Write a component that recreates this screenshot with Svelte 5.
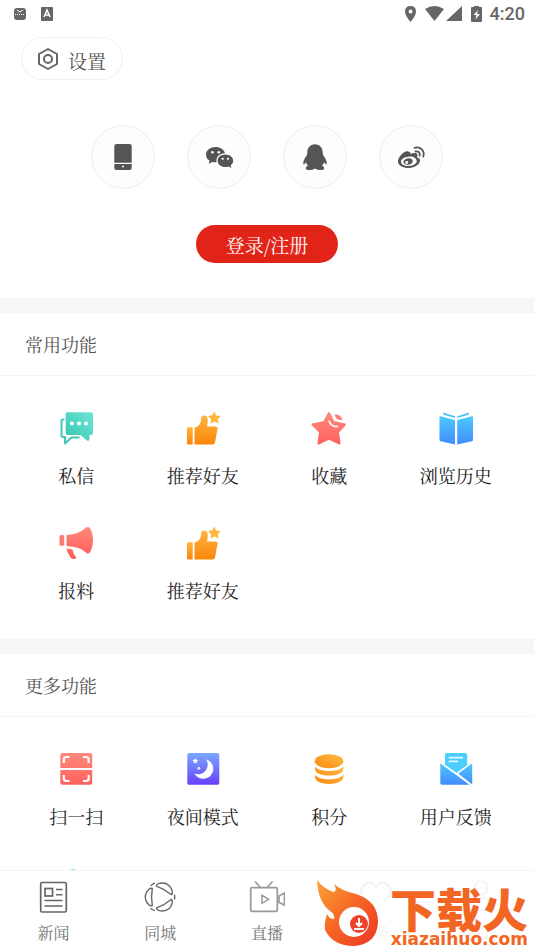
<script>
  const socials = [
    { id: "phone", label: "手机登录" },
    { id: "wechat", label: "微信登录" },
    { id: "qq", label: "QQ登录" },
    { id: "weibo", label: "微博登录" },
  ];

  const sections = [
    {
      title: "常用功能",
      items: [
        { icon: "message", label: "私信" },
        { icon: "thumb", label: "推荐好友" },
        { icon: "star", label: "收藏" },
        { icon: "book", label: "浏览历史" },
        { icon: "horn", label: "报料" },
        { icon: "thumb", label: "推荐好友" },
      ],
    },
    {
      title: "更多功能",
      items: [
        { icon: "scan", label: "扫一扫" },
        { icon: "night", label: "夜间模式" },
        { icon: "coins", label: "积分" },
        { icon: "mail", label: "用户反馈" },
        { icon: "drop", label: "" },
      ],
    },
  ];

  const tabs = [
    { icon: "news", label: "新闻" },
    { icon: "city", label: "同城" },
    { icon: "live", label: "直播" },
    { icon: "heart", label: "服务", faint: true },
    { icon: "me", label: "我的", faint: true },
  ];

  let current = $state("我的");
</script>

{#snippet tileIcon(name)}
  <svg class="tile-icon" viewBox="0 0 36 36" aria-hidden="true">
    {#if name === "message"}
      <path d="M6.5 9.5H5Q3.500 9.500 3.500 11V25.500Q3.500 27 5 27H7V33.500L13.500 27.500H21.500" fill="none" stroke="#3fc9b5" stroke-width="2" stroke-linejoin="round" />
      <path d="M9.500 2.200H33Q35 2.200 35 4V23Q35 25 33 25H31.500V29.500Q31 31.500 29 30.500L22.500 25H9.500Q7.700 25 7.700 23V4Q7.700 2.200 9.500 2.200Z" fill="url(#teal)" />
      <g fill="#fff"><circle cx="14" cy="13.500" r="2" /><circle cx="21" cy="13.500" r="2" /><circle cx="28" cy="13.500" r="2" /></g>
    {:else if name === "thumb"}
      <path d="M3 17.200H7.700V34.500H3Q2 34.500 2 33.500V18.200Q2 17.200 3 17.200Z" fill="url(#orange)" />
      <path d="M9.500 17.500C13.500 16.500 16 13.500 16 9.500C16 7 17 5.500 19.500 5.500C23 5.500 23.500 10 22 16.500H30.500Q33 16.500 32.500 19L30 32.500Q29.600 34.500 27.500 34.500H9.500Z" fill="url(#orange)" />
      <path d="M29.200 1.500L31.200 5.400L35.700 5.900L32.800 9.200L33.600 13.400L29.500 11.600L25.500 13.500L26 9.200L23.100 6.100L27.300 5.300Z" fill="#ffb83f" />
    {:else if name === "star"}
      <path d="M18 3L22.500 12L34 14.500L27 22L28.500 33.500L18 28.500L7.500 33.500L9 22L1.500 14.500L13 12Z" fill="url(#rose)" stroke="url(#rose)" stroke-width="2" stroke-linejoin="round" />
      <path d="M18 11Q20 17 26.500 16.500" fill="none" stroke="#fff" stroke-width="1.700" stroke-linecap="round" />
      <path d="M23.500 4.500Q30 4 31.500 10Q25 10.500 23.500 4.500Z" fill="#ff7b72" />
    {:else if name === "book"}
      <path d="M1.500 7Q1.500 6 2.500 6.200L17 10V34.500L2.500 31.200Q1.500 31 1.500 30Z M19.200 10L34 6.200Q35 6 35 7V30Q35 31 34 31.200L19.200 34.500Z" fill="url(#blue)" />
      <path d="M5 2.500L17 6.200V8L5.500 4.800Z M31 2.500L19.500 6.200V8L30.500 4.800Z" fill="#4cc4f4" />
    {:else if name === "horn"}
      <rect x="1.500" y="10" width="4.700" height="10.700" rx="1.500" fill="#ff7a73" />
      <path d="M8.500 10Q22 9 28 2.500C32.500-.5 35 9 35 15C35 22 32 31 28.500 28Q22 21.500 8.500 21Z" fill="url(#rose)" />
      <path d="M8.500 23.500L14.500 24.500Q15 29 18 32Q18.500 34 16 34H14Q10 30 8.500 23.500Z" fill="#ff6360" />
    {:else if name === "scan"}
      <path d="M4.500 2H32.500Q34.200 2 34.200 4V17H2.300V4Q2.300 2 4.500 2Z M2.300 19H34.200V31.700Q34.200 33.700 32.200 33.700H4.500Q2.300 33.700 2.300 31.700Z" fill="url(#rose)" />
      <path d="M5.800 12V8.500Q5.800 6 8.500 6H11.500M25 6H28Q30.700 6 30.700 8.500V12M5.800 24V27.500Q5.800 30 8.500 30H11.500M25 30H28Q30.700 30 30.700 27.500V24" fill="none" stroke="#fff" stroke-width="2.200" />
    {:else if name === "night"}
      <rect x="2.300" y="2" width="32" height="31.700" rx="1.700" fill="url(#violet)" />
      <path d="M21 8.200A10 10 0 1 1 9.300 22.300A9.500 9.500 0 0 0 21 8.200Z" fill="#fff" />
      <path d="M10.300 6.800L11.200 8.800L13.300 9.100L11.700 10.500L12.100 12.600L10.300 11.500L8.500 12.600L8.900 10.500L7.300 9.100L9.400 8.800Z" fill="#fff" />
      <circle cx="13.800" cy="17.300" r="1.500" fill="#e8e7ff" />
    {:else if name === "coins"}
      <ellipse cx="18" cy="10.300" rx="14.300" ry="7" fill="url(#gold)" />
      <path d="M4 15.500C8 21.500 28 21.500 32.300 15.500V18.500C31 26.500 5 26.500 4 18.500Z M4 23.500C8 30 28 30 32.300 23.500V26.500C31 35 5 35 4 26.500Z" fill="url(#gold)" />
    {:else if name === "mail"}
      <path d="M9 2H27Q29.200 2 29.200 4V15L18.500 22L7 14V4Q7 2 9 2Z" fill="#4bcdfd" />
      <path d="M10.700 6.700H25M10.700 10.300H20" fill="none" stroke="#e5f8ff" stroke-width="1.700" />
      <path d="M2.300 12L31.500 33.700H4Q2.300 33.700 2.300 32Z M34.200 12V33.500L20.200 22.500Z" fill="url(#blue)" />
      <path d="M2.300 11.500L34.200 34.500M34.200 11.500L19.500 22" fill="none" stroke="#fff" stroke-width="1.500" />
    {:else}
      <circle cx="15" cy="8" r="5" fill="#80dcff" />
    {/if}
  </svg>
{/snippet}

{#snippet socialIcon(name)}
  <svg class="social-icon" viewBox="0 0 32 32" aria-hidden="true">
    {#if name === "phone"}
      <path d="M9.500 3H22.500Q24.700 3 24.700 5.200V21.800H7.300V5.200Q7.300 3 9.500 3Z M7.300 23H24.700V27Q24.700 29 22.500 29H9.500Q7.300 29 7.300 27Z" />
      <circle cx="16" cy="25.500" r="1" fill="#fff" />
    {:else if name === "wechat"}
      <path d="M12.500 6C7.200 6 3 9.300 3 13.700C3 16.200 4.300 18.300 6.500 19.700L5.700 22.700L9.200 20.900Q11 21.500 13.500 21.300C12.500 16 17 12.200 22 12.300C21.200 8.500 17.300 6 12.500 6Z" />
      <path d="M22.300 13.400C17.800 13.400 14.600 16.200 14.600 19.700C14.600 23.300 18 26 22.300 26Q24 26 25.700 25.400L28.300 26.900L27.700 24.200C29.300 23 30.200 21.500 30.200 19.700C30.200 16.200 26.800 13.400 22.300 13.400Z" />
      <g fill="#fff"><circle cx="9.400" cy="11.300" r="1.300" /><circle cx="15.800" cy="11.300" r="1.300" /><circle cx="19.700" cy="17.800" r="1.100" /><circle cx="25" cy="17.800" r="1.100" /></g>
    {:else if name === "qq"}
      <path d="M16 3.300C11 3.300 8.300 7 8.300 11.500L8 14C5.500 17.500 4 20 4.300 23Q5 24.300 7 21.300Q7.500 23.400 9 24.700C6 25.600 6 29 9.500 29Q13.500 29.300 16 27.500Q18.500 29.300 22.500 29C26 29 26 25.600 23 24.700Q24.500 23.400 25 21.300Q27 24.300 27.700 23C28 20 26.500 17.500 24 14L23.700 11.500C23.700 7 21 3.300 16 3.300Z" />
    {:else}
      <path fill-rule="evenodd" d="M13 10.500C10 9 3 15.500 3 20.500C3 24.500 8 27 13.700 27C20 27 25 23 25 19.500Q25 17.200 22 16.500Q23.500 12.300 20.500 12Q18.500 11.500 15.500 13Q16 11 13 10.500ZM13.500 15.700C18 15.200 21.500 17.200 21.700 20C22 22.500 18.500 24.700 14 25C9.500 25.300 6.200 23.500 6 21C5.800 18.200 9 16 13.500 15.700Z" />
      <path fill-rule="evenodd" d="M13.500 17.200C10.500 17.500 8.300 19.300 8.500 21.300C8.700 23.200 11 24.200 13.500 23.700C16.500 23.200 18 21.300 17.700 19.700C17.500 18 15.800 17 13.500 17.200ZM11.800 20A1.500 1.500 0 1 1 11.700 23A1.500 1.500 0 1 1 11.800 20Z" />
      <path d="M19.500 6.800C25.500 5 30 10 28.300 15.500M20.500 10.500Q25.500 10 24.700 14.700" fill="none" stroke="#555" stroke-width="1.800" stroke-linecap="round" />
    {/if}
  </svg>
{/snippet}

{#snippet tabIcon(name)}
  <svg class="tab-icon" viewBox="0 0 36 36" fill="none" stroke="#666" stroke-width="1.700" aria-hidden="true">
    {#if name === "news"}
      <rect x="5.700" y="3.500" width="25.600" height="29.500" rx="1.500" />
      <rect x="10" y="9.500" width="7.500" height="7.500" />
      <path d="M21 10.500H27.500M21 15.700H27.500M9.500 21.500H27.500M9.500 27H27.500" stroke-width="1.400" />
    {:else if name === "city"}
      <g stroke-width="1.400">
        {#each [0, 120, 240] as angle}
          <g transform="rotate({angle} 18 18)">
            <path d="M10.300 9.500Q8.500 8.700 7.200 10Q3.300 13.500 3.300 18Q3.300 22.500 7.200 26Q8.500 27.300 10.300 26.500Q8.800 18 10.300 9.500Z" />
            <path d="M8.700 6.700Q10.500 5 13 4.200" />
          </g>
        {/each}
      </g>
    {:else if name === "live"}
      <g stroke="#999">
        <rect x="1.700" y="8.700" width="26.600" height="23.600" rx="1" />
        <path d="M6 2.500L11 8M23.500 2.500L18.500 8M30 17L35.500 14V26L30 23.500Z" />
        <path d="M13 16.300V24.300L19.700 20.300Z" stroke-width="1.500" />
      </g>
    {:else if name === "heart"}
      <path d="M20 30L7 17Q3 11 8 6Q15 1 20 8Q25 1 32 6Q37 11 33 17L28 22" />
    {:else}
      <g stroke="#1688e8"><circle cx="18" cy="9" r="6.500" /><path d="M5 31Q6 19 18 19Q30 19 31 31Z" /></g>
    {/if}
  </svg>
{/snippet}

<svg class="defs" width="0" height="0" aria-hidden="true">
  <defs>
    <linearGradient id="teal" x1="1" y1="0" x2="0" y2="1"><stop stop-color="#70e5d8" /><stop offset="1" stop-color="#35c5b0" /></linearGradient>
    <linearGradient id="orange" x1="0" y1="0" x2="0" y2="1"><stop stop-color="#ffb540" /><stop offset="1" stop-color="#fb860b" /></linearGradient>
    <linearGradient id="gold" x1="1" y1="0" x2="0" y2="1"><stop stop-color="#ffba43" /><stop offset="1" stop-color="#fa8b10" /></linearGradient>
    <linearGradient id="rose" x1="0" y1="0" x2="0" y2="1"><stop stop-color="#ff8a7c" /><stop offset="1" stop-color="#ff615f" /></linearGradient>
    <linearGradient id="blue" x1="0" y1="0" x2="0" y2="1"><stop stop-color="#4ccafd" /><stop offset="1" stop-color="#438bfd" /></linearGradient>
    <linearGradient id="violet" x1="0" y1="0" x2="0" y2="1"><stop stop-color="#79a9ff" /><stop offset="1" stop-color="#6640fb" /></linearGradient>
    <linearGradient id="flame" x1="0" y1="0" x2="1" y2="1"><stop stop-color="#fba436" /><stop offset=".5" stop-color="#f66525" /><stop offset="1" stop-color="#ed3522" /></linearGradient>
  </defs>
</svg>

<div class="app">
  <header class="status">
    <div class="status-group">
      <svg width="14" height="14" viewBox="0 0 14 14" aria-hidden="true">
        <rect x="1" y="1" width="12" height="12" rx="3" fill="#666" />
        <path d="M4 3L7 5L10 3" fill="none" stroke="#fff" />
        <path d="M2 7.500H12" fill="none" stroke="#fff" stroke-dasharray="1 1" />
      </svg>
      <svg width="14" height="14" viewBox="0 0 14 14" aria-hidden="true">
        <rect x="1" y="0" width="12" height="14" rx="1" fill="#666" />
        <path d="M4 10L7 3L10 10M5 8H9" fill="none" stroke="#fff" stroke-width="1.500" />
      </svg>
    </div>
    <div class="status-group right">
      <svg width="78" height="18" viewBox="0 0 78 18" fill="#666" aria-hidden="true">
        <path fill-rule="evenodd" d="M5.500 1Q11 1 11 6.500Q11 10.500 5.500 17Q0 10.500 0 6.500Q0 1 5.500 1ZM5.500 4.500A2 2 0 1 0 5.500 8.500A2 2 0 1 0 5.500 4.500Z" />
        <path d="M20 4Q29.500-2 39 4L29.500 16Z M57 1V16H41Z M69 2V1H74V2H76Q77 2 77 3V16Q77 17 76 17H67Q66 17 66 16V3Q66 2 67 2Z" />
        <path d="M73 5L68.500 10H71.300L70.500 14.500L75 9H72Z" fill="#fff" />
      </svg>
      <span>4:20</span>
    </div>
  </header>

  <main>
    <section class="account">
      <button class="settings">
        <svg width="24" height="24" viewBox="0 0 24 24" fill="none" stroke="#666" stroke-width="2" aria-hidden="true">
          <path d="M12 2L21 7V17L12 22L3 17V7Z" stroke-linejoin="round" />
          <circle cx="12" cy="12" r="4" />
        </svg>
        <span>设置</span>
      </button>
      <div class="socials">
        {#each socials as s}
          <button class="social" aria-label={s.label}>{@render socialIcon(s.id)}</button>
        {/each}
      </div>
      <button class="login">登录/注册</button>
    </section>

    {#each sections as section}
      <section class="panel">
        <h2>{section.title}</h2>
        <div class="grid">
          {#each section.items as item}
            <a class="tile" href="#item">
              {@render tileIcon(item.icon)}
              <span>{item.label}</span>
            </a>
          {/each}
        </div>
      </section>
    {/each}
  </main>

  <nav>
    {#each tabs as tab}
      <button
        class="tab"
        class:faint={tab.faint}
        aria-pressed={current === tab.label}
        onclick={() => current = tab.label}
      >
        {@render tabIcon(tab.icon)}
        <span>{tab.label}</span>
      </button>
    {/each}
    <div class="brand">
      <svg width="64" height="68" viewBox="0 0 64 68" aria-hidden="true">
        <path d="M1 0Q7 8 17 12Q22 12 18 4Q26 11 40 14Q62 21 62 42Q61 64 38 66Q17 66 9 50Q8 43 11 34Q13 39 18 39Q19 34 14 31Q2 22 1 0Z" fill="url(#flame)" />
        <circle cx="38" cy="42" r="15" fill="#fff" />
        <circle cx="43" cy="44" r="9" fill="#ed4228" />
        <path d="M43 38V45M40 43L43 46L46 43M38 49H48" fill="none" stroke="#fff" stroke-width="2" />
      </svg>
      <div class="brand-text">
        <strong>下载火</strong>
        <span>xiazaihuo.com</span>
      </div>
    </div>
  </nav>
</div>

<style>
  :global(body) { margin: 0; background: #fff; }
  .defs { position: absolute; }
  .app {
    display: flex;
    flex-direction: column;
    height: 100vh;
    overflow: hidden;
    background: #fff;
    color: #222;
    font-family: "Noto Serif CJK SC", "Noto Sans CJK SC", serif;
    font-size: 18px;
    font-weight: 400;
  }
  button {
    padding: 0;
    border: 0;
    background: none;
    color: inherit;
    font: inherit;
    cursor: pointer;
  }
  a { color: inherit; text-decoration: none; }

  .status {
    display: flex;
    flex: none;
    align-items: center;
    justify-content: space-between;
    height: 27px;
    padding: 0 9px 0 13px;
    color: #666;
    font-family: Roboto, sans-serif;
    font-weight: 500;
  }
  .status-group { display: flex; align-items: center; gap: 13px; }
  .status-group.right { gap: 7px; }

  main { flex: 1; min-height: 0; overflow: hidden; }
  .account {
    display: flex;
    flex-direction: column;
    align-items: center;
    padding: 10px 21px 35px;
  }
  .settings {
    display: flex;
    align-self: flex-start;
    align-items: center;
    gap: 8px;
    box-sizing: border-box;
    height: 43px;
    padding: 0 16px 0 14px;
    border: 1px solid #f0f0f0;
    border-radius: 22px;
    color: #555;
    font-size: 19px;
  }
  .settings span { padding-top: 4px; }
  .socials { display: flex; gap: 32px; margin: 45px 0 36px; }
  .social {
    display: grid;
    place-items: center;
    box-sizing: border-box;
    width: 64px;
    height: 64px;
    border: 1px solid #efefef;
    border-radius: 50%;
    background: #fdfdfd;
  }
  .social-icon { width: 32px; height: 32px; fill: #555; }
  .login {
    height: 38px;
    padding: 0 30px;
    border-radius: 19px;
    background: #e22418;
    color: #fff;
    font-size: 19px;
  }

  .panel { border-top: 15px solid #f6f6f6; }
  h2 {
    box-sizing: border-box;
    height: 63px;
    margin: 0;
    padding: 0 25px;
    border-bottom: 1px solid #f4f4f4;
    color: #555;
    font-size: 18px;
    font-weight: 400;
    line-height: 63px;
  }
  .grid {
    display: grid;
    grid-template-columns: repeat(4, 1fr);
    row-gap: 35px;
    padding: 34px 15px 34px 13px;
  }
  .tile {
    display: flex;
    flex-direction: column;
    align-items: center;
    gap: 15px;
    height: 80px;
    line-height: 28px;
  }
  .tile-icon { width: 36px; height: 36px; flex: none; }

  nav {
    position: relative;
    display: flex;
    flex: none;
    height: 79px;
    border-top: 1px solid #f5f5f5;
    background: #fff;
  }
  .tab {
    display: flex;
    flex: 1;
    flex-direction: column;
    align-items: center;
    gap: 6px;
    padding-top: 8px;
    color: #777;
    font-size: 16px;
    line-height: 24px;
  }
  .tab.faint { opacity: 0.08; }
  .tab-icon { width: 36px; height: 36px; }

  /* site badge laid over the last two tabs */
  .brand {
    position: absolute;
    right: 6px;
    bottom: 2px;
    display: flex;
    align-items: flex-end;
    gap: 10px;
    color: #f26522;
    pointer-events: none;
  }
  .brand-text { display: flex; flex-direction: column; align-items: flex-end; }
  .brand strong { font-family: "Noto Sans CJK SC", sans-serif; font-size: 46px; font-weight: 900; line-height: 46px; }
  .brand-text span { font-family: "DejaVu Sans", sans-serif; font-size: 17px; font-weight: 700; line-height: 18px; }
</style>
